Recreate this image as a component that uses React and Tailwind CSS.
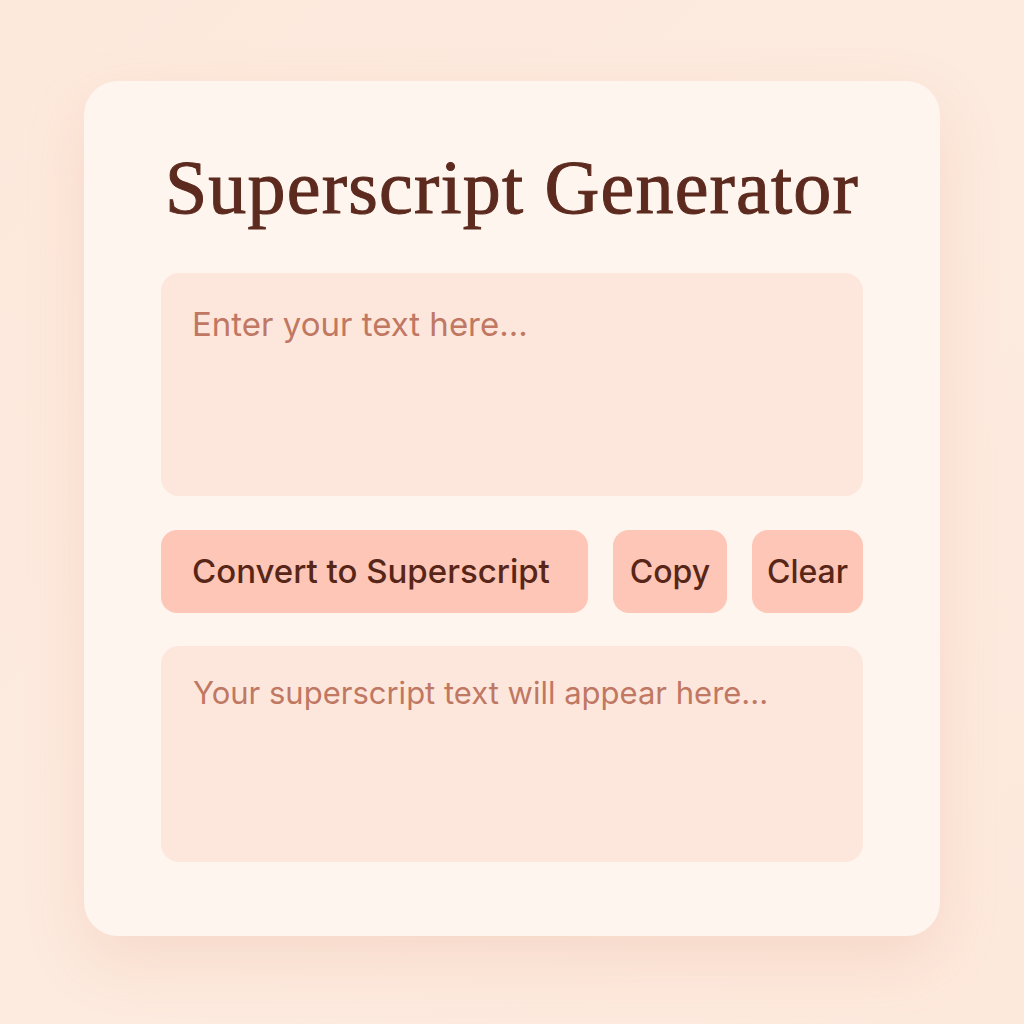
import React, { useState } from 'react'

const sup = {
  a: 'ᵃ', b: 'ᵇ', c: 'ᶜ', d: 'ᵈ', e: 'ᵉ', f: 'ᶠ', g: 'ᵍ', h: 'ʰ', i: 'ⁱ', j: 'ʲ', k: 'ᵏ', l: 'ˡ', m: 'ᵐ',
  n: 'ⁿ', o: 'ᵒ', p: 'ᵖ', r: 'ʳ', s: 'ˢ', t: 'ᵗ', u: 'ᵘ', v: 'ᵛ', w: 'ʷ', x: 'ˣ', y: 'ʸ', z: 'ᶻ',
  0: '⁰', 1: '¹', 2: '²', 3: '³', 4: '⁴', 5: '⁵', 6: '⁶', 7: '⁷', 8: '⁸', 9: '⁹', '+': '⁺', '-': '⁻', '=': '⁼', '(': '⁽', ')': '⁾',
}

const App = () => {
  const [text, setText] = useState('')
  const [out, setOut] = useState('')

  const convert = () => setOut(text.split('').map((ch) => sup[ch.toLowerCase()] || ch).join(''))

  return (
    <div className="min-h-screen w-full bg-gradient-to-br from-[#fde9dc] via-[#fdebdf] to-[#fde9dc] flex items-start justify-center pt-[81px]">
      <div className="w-[856px] h-[855px] rounded-[34px] bg-[#fef5ef] shadow-[0_24px_60px_rgba(214,140,110,0.18)] px-[77px] pt-[58px] flex flex-col">
        {/* Title */}
        <h1 className="text-center text-[#5c2a1e] text-[76px] leading-[96px] tracking-[1.2px] font-normal font-['Liberation_Serif',serif] [-webkit-text-stroke:1px_#5c2a1e]">
          Superscript Generator
        </h1>

        {/* Input */}
        <textarea
          value={text}
          onChange={(e) => setText(e.target.value)}
          placeholder="Enter your text here..."
          className="mt-[38px] h-[223px] w-full resize-none rounded-[18px] bg-[#fde7dd] px-[31px] pt-[29px] text-[33px] leading-[44px] text-[#5c2a1e] placeholder:text-[#c07863] outline-none font-['Inter',sans-serif]"
        />

        {/* Buttons */}
        <div className="mt-[34px] flex gap-[25px] font-['Inter',sans-serif]">
          <button onClick={convert} className="h-[83px] w-[427px] rounded-[16px] bg-[#fdc6b6] text-left pl-[31px] text-[33px] font-medium text-[#582618]">
            Convert to Superscript
          </button>
          <button onClick={() => navigator.clipboard?.writeText(out)} className="h-[83px] w-[114px] rounded-[16px] bg-[#fdc6b6] text-[32px] font-medium text-[#582618]">
            Copy
          </button>
          <button onClick={() => { setText(''); setOut('') }} className="h-[83px] w-[111px] rounded-[16px] bg-[#fdc6b6] text-[32px] font-medium text-[#582618]">
            Clear
          </button>
        </div>

        {/* Output */}
        <div className="mt-[33px] h-[216px] w-full rounded-[18px] bg-[#fde7dd] px-[32px] pt-[25px] text-[31px] leading-[44px] font-['Inter',sans-serif]">
          {out ? (
            <span className="text-[#5c2a1e]">{out}</span>
          ) : (
            <span className="text-[#c07863]">Your superscript text will appear here...</span>
          )}
        </div>
      </div>
    </div>
  )
}

export default App
